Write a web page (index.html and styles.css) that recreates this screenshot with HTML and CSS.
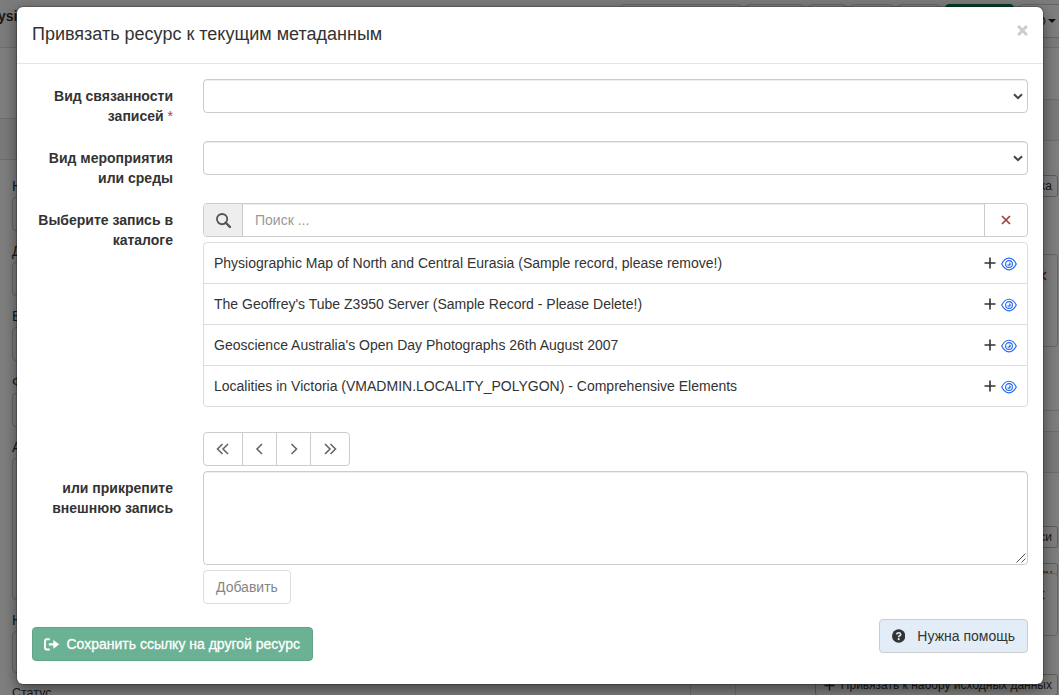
FILE: index.html
```
<!DOCTYPE html>
<html lang="ru">
<head>
<meta charset="utf-8">
<title>Привязать ресурс к текущим метаданным</title>
<link rel="stylesheet" href="styles.css">
</head>
<body>
<svg class="sprite" aria-hidden="true">
  <symbol id="plus" viewBox="0 0 12 12"><path d="M6 0.5v11M0.5 6h11" fill="none" stroke="currentColor" stroke-width="1.6"/></symbol>
  <symbol id="eye" viewBox="0 0 16 14"><path d="M0.7 7Q3.7 1.2 8 1.2T15.3 7Q12.3 12.8 8 12.8T0.7 7Z" fill="none" stroke="currentColor" stroke-width="1.15"/><circle cx="8" cy="7" r="3.4" fill="none" stroke="currentColor" stroke-width="1.1"/><path d="M8 5.2a1.8 1.8 0 1 1-1.8 2 1.3 1.3 0 0 0 1.8-2Z" fill="currentColor"/></symbol>
  <symbol id="cross" viewBox="0 0 10 10"><path d="M1 1l8 8M9 1l-8 8" fill="none" stroke="currentColor" stroke-width="1.7"/></symbol>
  <symbol id="cross-bold" viewBox="0 0 10 10"><path d="M1 1l8 8M9 1l-8 8" fill="none" stroke="currentColor" stroke-width="2.6"/></symbol>
  <symbol id="down" viewBox="0 0 10 7"><path d="M1 1.2l4 4 4-4" fill="none" stroke="currentColor" stroke-width="2"/></symbol>
</svg>
<div class="page">
  <header class="topbar">
    <b class="page-title">ysiographic</b>
    <div class="toolbar">
      <span class="tool t-xl"></span><span class="tool t-lg"></span><span class="tool t-sm"></span><span class="tool t-md"></span><span class="tool t-md"></span><span class="tool t-save"></span>
      <span class="tool t-view"><svg class="view-icon" viewBox="0 0 16 14"><path d="M0 7Q4 1 9 1Q15 3 15 7Q15 11 9 13Q4 13 0 7Z" fill="#ffe3a0" stroke="#26598f" stroke-width="1.3"/></svg><i class="caret"></i></span>
    </div>
  </header>
  <div class="columns">
    <main class="panel editor">
      <div class="panel-head"></div>
      <div class="fields">
        <label>Н</label><span class="box"></span>
        <label>Д</label><span class="box"></span>
        <label>В</label><span class="box"></span>
        <label>Ф</label><span class="box"></span>
        <label>А</label><span class="box tall"></span>
        <label>Н</label><span class="box mid"></span>
        <label class="status">Статус</label>
      </div>
    </main>
    <aside class="side">
      <section class="panel assoc">
        <div class="panel-head"></div>
        <span class="chip c1">Добавить миниатюра/картинка</span>
        <div class="item i1"><svg><use href="#cross"/></svg></div>
      </section>
      <section class="panel rest">
        <div class="panel-head"></div>
        <span class="chip c2">Привязать родительские записи</span>
        <span class="chip c3">Привязать к ресурсу</span>
        <div class="item i2"><svg><use href="#cross"/></svg></div>
        <span class="chip c4"><svg class="plus"><use href="#plus"/></svg>Привязать к набору исходных данных</span>
      </section>
    </aside>
  </div>
</div>
<div class="backdrop"></div>
<div class="modal" role="dialog">
  <div class="modal-head"><h4>Привязать ресурс к текущим метаданным</h4><svg class="close"><use href="#cross-bold"/></svg></div>
  <div class="modal-body">
    <div class="row">
      <label>Вид связанности записей <span class="required">*</span></label>
      <div class="control select"><svg><use href="#down"/></svg></div>
    </div>
    <div class="row">
      <label>Вид мероприятия или среды</label>
      <div class="control select"><svg><use href="#down"/></svg></div>
    </div>
    <div class="row catalog">
      <label>Выберите запись в каталоге</label>
      <div>
        <div class="search">
          <span class="addon"><svg viewBox="0 0 14 14"><circle cx="5.7" cy="5.7" r="4.8" fill="none" stroke="currentColor" stroke-width="1.7"/><path d="M9 9l4.2 4.2" stroke="currentColor" stroke-width="2.1" stroke-linecap="round"/></svg></span>
          <span class="query">Поиск ...</span>
          <span class="clear"><svg><use href="#cross"/></svg></span>
        </div>
        <ul class="records">
          <li><span>Physiographic Map of North and Central Eurasia (Sample record, please remove!)</span><svg class="plus"><use href="#plus"/></svg><svg class="eye"><use href="#eye"/></svg></li>
          <li><span>The Geoffrey's Tube Z3950 Server (Sample Record - Please Delete!)</span><svg class="plus"><use href="#plus"/></svg><svg class="eye"><use href="#eye"/></svg></li>
          <li><span>Geoscience Australia's Open Day Photographs 26th August 2007</span><svg class="plus"><use href="#plus"/></svg><svg class="eye"><use href="#eye"/></svg></li>
          <li><span>Localities in Victoria (VMADMIN.LOCALITY_POLYGON) - Comprehensive Elements</span><svg class="plus"><use href="#plus"/></svg><svg class="eye"><use href="#eye"/></svg></li>
        </ul>
        <div class="pager">
          <span class="wide"><svg viewBox="0 0 14 12"><path d="M6.5 1l-5 5 5 5M12 1L7 6l5 5"/></svg></span>
          <span><svg viewBox="0 0 14 12"><path d="M9 1L4 6l5 5"/></svg></span>
          <span><svg viewBox="0 0 14 12"><path d="M4.5 1l5 5-5 5"/></svg></span>
          <span class="wide"><svg viewBox="0 0 14 12"><path d="M2 1l5 5-5 5M7.5 1l5 5-5 5"/></svg></span>
        </div>
      </div>
    </div>
    <div class="row external">
      <label>или прикрепите внешнюю запись</label>
      <div>
        <div class="control area"><svg viewBox="0 0 10 10"><path d="M0.5 9.5l9-9M5.5 9.5l4-4" stroke="#555" fill="none"/></svg></div>
        <span class="btn add">Добавить</span>
      </div>
    </div>
    <div class="actions">
      <span class="btn save"><svg viewBox="0 0 16 13"><path d="M6 1.1H3.2Q1 1.1 1 3.3v6.2q0 2.2 2.2 2.2H6" fill="none" stroke="#fff" stroke-width="2"/><path d="M5 5.2h4.7V1.9L15.8 6.4 9.7 10.9V7.6H5Z" fill="#fff"/></svg>Сохранить ссылку на другой ресурс</span>
      <span class="btn help"><svg viewBox="0 0 14 14"><circle cx="7" cy="7" r="7" fill="#333"/><path d="M4.9 5.4Q5.1 3.6 7 3.6T9.1 5.3Q9.1 6.3 8 6.8 7 7.2 7 8.2" fill="none" stroke="#e3edf8" stroke-width="1.7"/><circle cx="7" cy="10.3" r="1.1" fill="#e3edf8"/></svg>Нужна помощь</span>
    </div>
  </div>
</div>
</body>
</html>
```
FILE: styles.css
```
* { box-sizing: border-box; }
body {
  margin: 0;
  height: 695px;
  overflow: hidden;
  position: relative;
  font: 14px/20px "Liberation Sans", Arial, sans-serif;
  color: #333;
}
.sprite { position: absolute; width: 0; height: 0; }
svg { display: block; }

/* Editor page under the dialog */
.page { height: 695px; overflow: hidden; background: #fff; }
.topbar { display: flex; justify-content: space-between; height: 48px; background: #f8f8f8; border-bottom: 1px solid #ddd; overflow: hidden; }
.page-title { margin-left: -2px; padding-top: 6px; white-space: nowrap; }
.toolbar { display: flex; gap: 5px; padding-top: 4px; width: 439px; }
.tool { flex: none; height: 34px; border: 1px solid #ccc; border-radius: 4px; background: #fff; }
.t-xl { width: 121px; }
.t-lg { width: 58px; }
.t-sm { width: 37px; }
.t-md { width: 42px; }
.t-save { width: 69px; background: #00884a; border-color: #00713d; }
.t-view { display: flex; align-items: center; width: 60px; padding-left: 11px; border-radius: 4px 0 0 4px; }
.view-icon { flex: none; width: 16px; height: 12px; }
.caret { margin-left: 1px; border: 4px solid transparent; border-top-color: #222; border-bottom: 0; }
.columns { display: grid; grid-template-columns: 691px 1fr; gap: 44px; }
.panel { border: 1px solid #ddd; }
.panel-head { height: 41px; background: #f5f5f5; border-bottom: 1px solid #ddd; }
.editor { margin-top: 70px; height: 600px; border-left: 0; }
.fields { display: flex; flex-direction: column; padding: 16px 12px; }
.fields label { height: 21px; }
.fields .status { font-size: 12.5px; }
.box { height: 34px; margin-bottom: 10.2px; border: 1px solid #ccc; border-radius: 4px; }
.box.tall { height: 142px; }
.box.mid { height: 42px; }
.side { display: flex; flex-direction: column; gap: 20px; padding-top: 51px; }
.side .panel { display: flex; flex-direction: column; align-items: flex-end; padding-right: 1px; border-right: 0; }
.side .panel-head { align-self: stretch; margin-right: -1px; flex: none; }
.assoc { height: 312px; }
.rest { height: 350px; }
.chip { display: flex; align-items: center; flex: none; height: 22px; padding: 0 5px; font-size: 12px; border: 1px solid #bbb; border-radius: 3px; white-space: nowrap; }
.c1 { margin-top: 34px; }
.item { flex: none; display: flex; justify-content: flex-end; width: 290px; border: 1px solid #ccc; border-radius: 4px; background: #fff; color: #a52a2a; }
.item svg { width: 10px; height: 10px; margin: 16px 10px; }
.i1 { height: 93px; margin-top: 57px; }
.c2 { margin-top: 53px; }
.c3 { margin-top: 15px; }
.i2 { height: 63px; margin-top: -12px; }
.i2 svg { margin-right: 12px; }
.c4 { margin-top: 38px; gap: 6px; padding-left: 8px; }
.chip .plus { width: 11px; height: 11px; }

.backdrop { position: absolute; inset: 0; background: rgba(0, 0, 0, .5); }

/* Dialog */
.modal { position: absolute; left: 17px; top: 7px; width: 1026px; height: 677px; background: #fff; border-radius: 6px; box-shadow: 0 5px 15px rgba(0, 0, 0, .5), 0 0 0 1px rgba(0, 0, 0, .2); }
.modal-head { display: flex; justify-content: space-between; height: 57px; padding: 15px 15px 0; border-bottom: 1px solid #e5e5e5; }
h4 { margin: 0; font-size: 18px; font-weight: 400; line-height: 25px; }
.close { width: 11px; height: 11px; margin-top: 3px; color: #ccc; }
.modal-body { padding: 15px; }
.row { display: grid; grid-template-columns: 141px 825px; gap: 30px; height: 62px; }
.row label { padding-top: 7px; font-weight: 700; text-align: right; }
.required { color: #a94442; font-weight: 400; }
.control { border: 1px solid #ccc; border-radius: 4px; box-shadow: inset 0 1px 1px rgba(0, 0, 0, .075); }
.select { display: flex; align-items: center; justify-content: flex-end; height: 34px; padding-right: 4px; color: #444; }
.select svg { width: 10px; height: 7px; }
.row.catalog { height: 268px; }
.search { display: flex; height: 34px; border: 1px solid #ccc; border-radius: 4px; overflow: hidden; }
.addon { display: flex; align-items: center; justify-content: center; width: 39px; background: #eee; border-right: 1px solid #ccc; color: #555; }
.addon svg { width: 15px; height: 15px; }
.query { flex: 1; padding: 6px 12px; color: #999; box-shadow: inset 0 1px 1px rgba(0, 0, 0, .075); }
.clear { display: flex; align-items: center; justify-content: center; width: 43px; border-left: 1px solid #ccc; color: #a43c38; }
.clear svg { width: 10px; height: 10px; }
.records { list-style: none; margin: 5px 0 25px; padding: 0; border: 1px solid #ddd; border-radius: 4px; }
.records li { display: flex; align-items: center; height: 41px; padding: 0 10px; border-bottom: 1px solid #ddd; }
.records li:last-child { height: 40px; border-bottom: 0; }
.records span { flex: 1; }
.records .plus { width: 12px; height: 12px; margin-right: 5px; }
.records .eye { width: 16px; height: 14px; margin-top: 2px; color: #1f66f2; }
.pager { display: flex; width: 147px; height: 34px; border: 1px solid #ccc; border-radius: 4px; }
.pager span { display: flex; align-items: center; justify-content: center; flex: 0 0 34px; border-right: 1px solid #ccc; }
.pager .wide { flex-basis: 39px; }
.pager span:last-child { border: 0; flex-basis: 38px; }
.pager svg { width: 14px; height: 12px; fill: none; stroke: #666; stroke-width: 1.6; }
.row.external { height: 148px; }
.area { display: flex; align-items: flex-end; justify-content: flex-end; height: 94px; padding: 1px; }
.area svg { width: 10px; height: 10px; }
.btn { display: inline-flex; align-items: center; height: 34px; padding: 0 12px; border: 1px solid #ccc; border-radius: 4px; white-space: nowrap; }
.add { margin-top: 5px; color: #858585; border-color: #ddd; }
.actions { display: flex; justify-content: space-between; }
.save { margin-top: 8px; width: 281px; padding-left: 11px; background: #6bb193; border-color: #61a588; color: #fff; -webkit-text-stroke: .3px #fff; }
.save svg { width: 16px; height: 13px; margin-right: 7px; }
.help { width: 149px; background: #e3edf8; }
.help svg { width: 14px; height: 14px; margin-right: 12px; }
```
